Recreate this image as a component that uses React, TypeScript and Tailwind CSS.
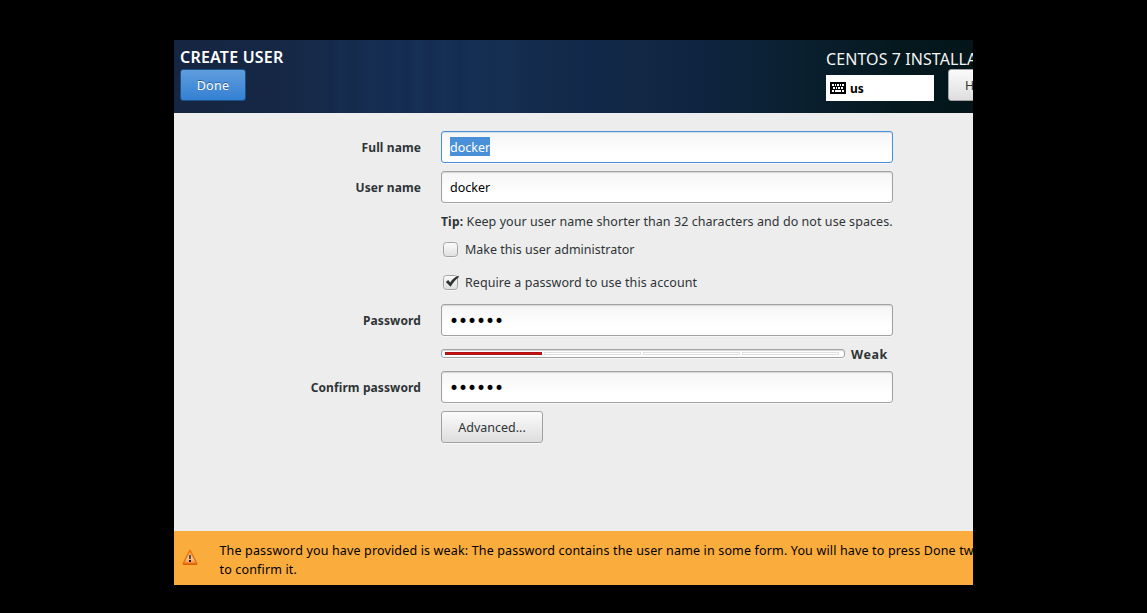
import type { ReactNode } from "react";

const NOTO = "font-['Noto_Sans',sans-serif]";

function Row({ label, className = "", children }: { label?: string; className?: string; children: ReactNode }) {
  return (
    <div className={`flex items-center ${className}`}>
      <div className="mr-5 w-[247px] shrink-0 pt-0.5 text-right text-[12px] font-bold tracking-[0.1px] whitespace-nowrap">{label}</div>
      {children}
    </div>
  );
}

function Field({ focused = false, children }: { focused?: boolean; children: ReactNode }) {
  return (
    <div
      className={`flex h-8 w-[452px] items-center rounded-[3px] border bg-linear-to-b from-[#f5f5f5] to-white to-70% px-2 text-[12.5px] text-black ${
        focused
          ? "border-[#4a90d9] shadow-[0_1px_0_#f8f8f8,inset_0_1px_1px_#d3dce6]"
          : "border-[#a1a1a1] shadow-[0_1px_0_#f8f8f8,inset_0_1px_1px_#d8d8d8]"
      }`}
    >
      {children}
    </div>
  );
}

function Dots() {
  return <span className="-ml-px pt-0.5 font-['DejaVu_Sans',sans-serif] text-[17px] leading-none tracking-[-1.03px]">••••••</span>;
}

function Check({ checked = false }: { checked?: boolean }) {
  return (
    <svg width="17" height="18" viewBox="0 0 17 18" className="mr-[5px] ml-0.5 shrink-0">
      <defs>
        <linearGradient id="box" x1="0" y1="0" x2="0" y2="1">
          <stop offset="0" stopColor="#fcfcfc" />
          <stop offset="1" stopColor="#dfdfdf" />
        </linearGradient>
      </defs>
      <rect x="0.5" y="2.5" width="14" height="14" rx="3" fill="none" stroke="#f8f8f8" />
      <rect x="0.5" y="1.5" width="14" height="14" rx="3" fill="url(#box)" stroke="#a3a3a3" />
      {checked && <path d="M2.8 8 5.2 5.9 7.2 8.4C9.2 5.5 11.6 3.2 15.2 1.8L16 3C12.6 5.6 10.2 8.6 7.6 12.8Z" fill="#2e3436" />}
    </svg>
  );
}

function Keyboard() {
  return (
    <svg width="16" height="12" viewBox="0 0 16 12" className="shrink-0" shapeRendering="crispEdges">
      <rect width="16" height="12" rx="1" fill="#000" />
      <path
        d="M2 2h2v2H2zM5 2h1v2H5zM7 2h2v2H7zM10 2h1v2h-1zM12 2h2v2h-2zM3 5h2v2H3zM6 5h1v2H6zM8 5h2v2H8zM11 5h2v2h-2zM2 8h2v2H2zM5 8h6v2H5zM12 8h2v2h-2z"
        fill="#fff"
      />
    </svg>
  );
}

function Warning() {
  return (
    <svg width="16" height="16" viewBox="0 0 16 16" className="mb-0.5 shrink-0">
      <defs>
        <linearGradient id="warn" x1="0" y1="0" x2="0" y2="1">
          <stop offset="0" stopColor="#f9a04a" />
          <stop offset="0.6" stopColor="#fbc794" />
          <stop offset="1" stopColor="#f58a2e" />
        </linearGradient>
      </defs>
      <path d="M8 1.4 14.9 14.6H1.1Z" fill="url(#warn)" stroke="#ed7410" strokeWidth="1.5" strokeLinejoin="round" />
      <path d="M1 15.3H15" stroke="#cf5600" strokeWidth="1" />
      <path d="M7 6h2v4H7z" fill="#4a4f58" />
      <path d="M7 11h2v2H7z" fill="#1d1d1d" />
    </svg>
  );
}

export default function App() {
  return (
    <div className={`flex h-[613px] w-[1147px] bg-black pt-10 pl-[174px] text-[12.5px] text-[#2e3436] ${NOTO}`}>
      <div className="flex h-[545px] w-[799px] flex-col overflow-hidden bg-[#ededed]">
        <header className="flex h-[73px] shrink-0 justify-between bg-[linear-gradient(90deg,#152542_0px,#152744_90px,#162a4a_150px,#14284a_158px,#162d50_166px,#152a4b_178px,#162e52_196px,#142c4f_216px,#162e54_224px,#142b50_233px,#163056_243px,#152c50_256px,#162f55_270px,#142c52_286px,#152f54_300px,#142d51_316px,#152f52_335px,#132b4c_362px,#142a4b_385px,#12284a_420px,#122844_460px,#0f2440_520px,#0c2237_580px,#091e2b_650px,#04191f_720px,#031519_799px)]">
          <div className="flex flex-col pt-[7px] pl-1.5">
            <div className="h-[22px] text-[16px] leading-[21px] font-semibold tracking-[0.2px] text-white">CREATE USER</div>
            <button className="h-8 w-[66px] rounded-[3px] border border-[#1c5187] bg-linear-to-b from-[#5f9ddd] to-[#3380d3] pt-0.5 text-[12.5px] tracking-[0.3px] text-white [text-shadow:0_-1px_#2a5f9c]">
              Done
            </button>
          </div>
          <div className="flex w-[147px] flex-col overflow-hidden pt-[7px]">
            <div className="h-[22px] text-[16px] leading-6 tracking-[0.08px] whitespace-nowrap text-[#f4f5f5]">CENTOS 7 INSTALLATION</div>
            <div className="flex">
              <div className="mt-1.5 flex h-[26px] w-[108px] shrink-0 items-center gap-1 bg-white pl-1 text-[12px] font-bold text-black">
                <Keyboard />
                <span className="pt-0.5">us</span>
              </div>
              <button className="ml-3.5 h-8 w-[80px] shrink-0 rounded-[3px] border border-[#a1a1a1] bg-linear-to-b from-[#fbfbfb] to-[#dedede] pt-0.5 pl-4 text-left text-[12.5px]">
                Help!
              </button>
            </div>
          </div>
        </header>

        <main className="flex grow flex-col pt-[18px]">
          <Row label="Full name">
            <Field focused>
              <span className="mb-0.5 h-[19px] bg-[#4a90d9] pt-px leading-[20px] text-white">docker</span>
            </Field>
          </Row>
          <Row label="User name" className="mt-2">
            <Field>
              <span className="pt-0.5">docker</span>
            </Field>
          </Row>
          <Row className="mt-[9px] h-5">
            <p className="tracking-[0.06px] whitespace-nowrap">
              <b className="text-[12px] tracking-[0.2px]">Tip:</b> Keep your user name shorter than 32 characters and do not use spaces.
            </p>
          </Row>
          <Row className="mt-2 h-5">
            <Check />
            <span>Make this user administrator</span>
          </Row>
          <Row className="mt-[13px] h-5">
            <Check checked />
            <span className="tracking-[0.07px]">Require a password to use this account</span>
          </Row>
          <Row label="Password" className="mt-[11px]">
            <Field>
              <Dots />
            </Field>
          </Row>
          <Row className="mt-[9px] h-[18px]">
            <div className="mb-px flex h-[9px] w-[404px] gap-0.5 rounded-[3px] border border-[#a1a1a1] bg-white py-0.5 pr-[5px] pl-[3px] shadow-[0_1px_0_#f8f8f8,inset_0_1px_1px_#d8d8d8]">
              <div className="grow basis-0 border border-[#a81818] bg-[#d40c0c]" />
              <div className="grow basis-0 border border-[#e0e0e0] bg-white" />
              <div className="grow basis-0 border border-[#e0e0e0] bg-white" />
              <div className="grow basis-0 border border-[#e0e0e0] bg-white" />
            </div>
            <span className="ml-1.5 pt-0.5 text-[12.5px] font-bold tracking-[0.6px]">Weak</span>
          </Row>
          <Row label="Confirm password" className="mt-2">
            <Field>
              <Dots />
            </Field>
          </Row>
          <Row className="mt-2">
            <button className="h-8 w-[102px] rounded-[3px] border border-[#a1a1a1] bg-linear-to-b from-[#fbfbfb] to-[#dedede] pt-0.5 shadow-[0_1px_0_#f8f8f8]">
              Advanced...
            </button>
          </Row>
        </main>

        <footer className="flex h-[54px] shrink-0 items-center gap-[21.5px] bg-[#faac3d] pl-2 text-black">
          <Warning />
          <p className="pt-[3px] leading-[19px] tracking-[0.155px] whitespace-nowrap">
            The password you have provided is weak: The password contains the user name in some form. You will have to press Done twice
            <br />
            to confirm it.
          </p>
        </footer>
      </div>
    </div>
  );
}
